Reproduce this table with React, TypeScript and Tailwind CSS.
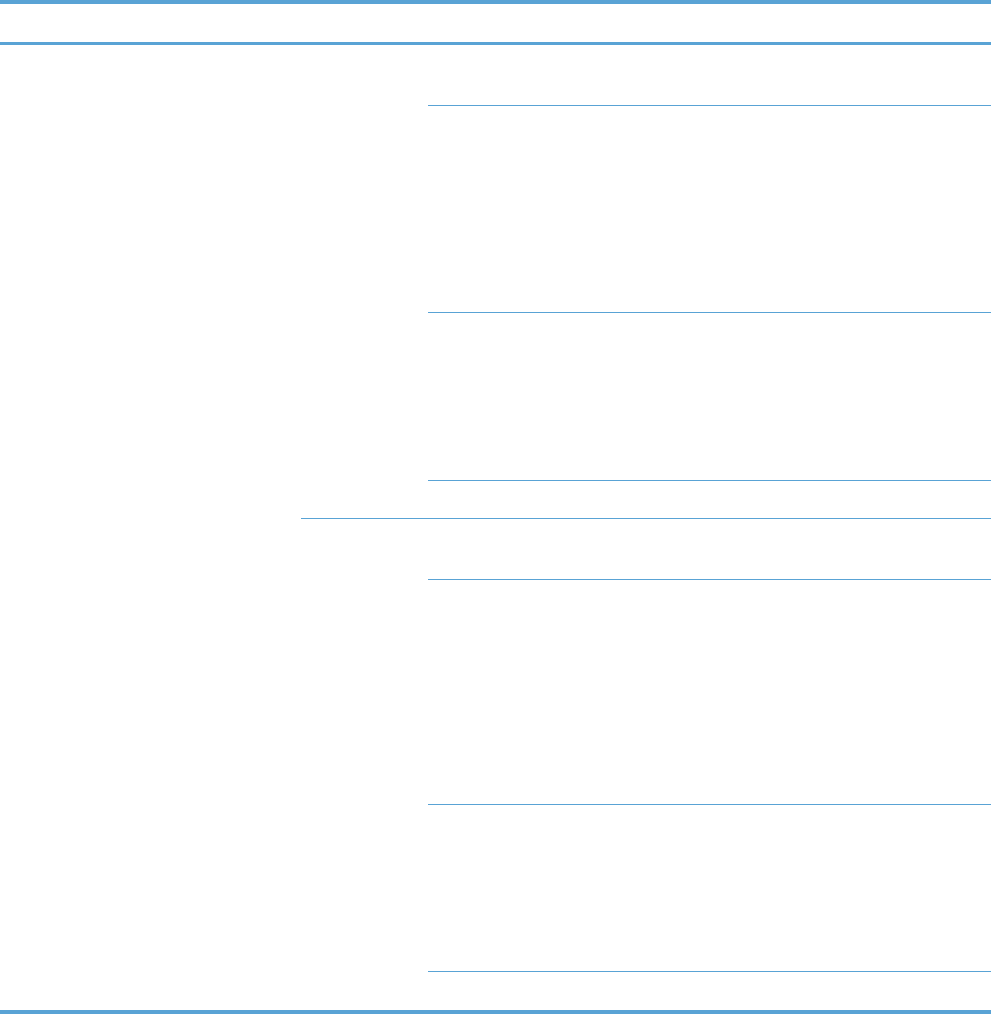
const line = 'border-[#59a3d5]';

function SubRows({ heights }: { heights: number[] }) {
  return (
    <div className="flex flex-1 flex-col">
      {heights.map((h, i) => (
        <div
          key={i}
          className={i < heights.length - 1 ? `border-b ${line}` : ''}
          style={{ height: h }}
        />
      ))}
    </div>
  );
}

function Group({ heights, divider }: { heights: number[]; divider?: boolean }) {
  return (
    <div className={`flex ${divider ? `border-b ${line}` : ''}`}>
      <div className="w-[127px] shrink-0" />
      <SubRows heights={heights} />
    </div>
  );
}

export default function App() {
  return (
    <div className="w-[991px] bg-white">
      {/* Header */}
      <div className={`h-[45px] border-t-4 border-b-[3px] ${line}`} />

      {/* Body */}
      <div className="flex">
        <div className="w-[301px] shrink-0" />
        <div className="flex flex-1 flex-col">
          <Group heights={[61, 207, 168, 37]} divider />
          <Group heights={[61, 225, 167, 38]} />
        </div>
      </div>

      <div className={`h-1 border-t-4 ${line}`} />
    </div>
  );
}
